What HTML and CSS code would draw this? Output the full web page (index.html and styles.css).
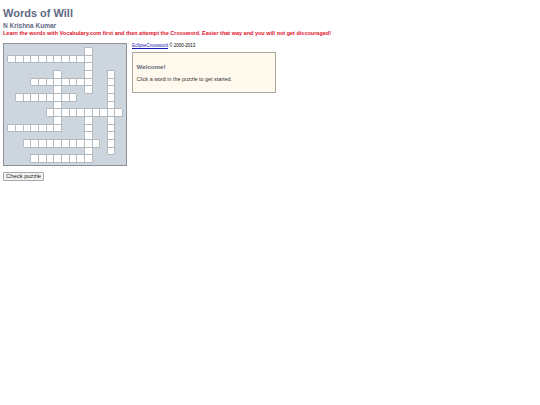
FILE: index.html
```html
<!DOCTYPE html>
<html lang="en">
<head>
<meta charset="utf-8">
<title>Words of Will</title>
<link rel="stylesheet" href="styles.css">
</head>
<body>
<h1 class="title">Words of Will</h1>
<h2 class="author">N Krishna Kumar</h2>
<p class="notice">Learn the words with Vocabulary.com first and then attempt the Crossword. Easier that way and you will not get discouraged!</p>
<div class="main">
  <div class="puzzle">
    <div class="board">
      <i></i><i></i><i></i><i></i><i></i><i></i><i></i><i></i><i></i><i></i><b></b><i></i><i></i><i></i><i></i>
      <b></b><b></b><b></b><b></b><b></b><b></b><b></b><b></b><b></b><b></b><b></b><i></i><i></i><i></i><i></i>
      <i></i><i></i><i></i><i></i><i></i><i></i><i></i><i></i><i></i><i></i><b></b><i></i><i></i><i></i><i></i>
      <i></i><i></i><i></i><i></i><i></i><i></i><b></b><i></i><i></i><i></i><b></b><i></i><i></i><b></b><i></i>
      <i></i><i></i><i></i><b></b><b></b><b></b><b></b><b></b><b></b><b></b><b></b><i></i><i></i><b></b><i></i>
      <i></i><i></i><i></i><i></i><i></i><i></i><b></b><i></i><i></i><i></i><b></b><i></i><i></i><b></b><i></i>
      <i></i><b></b><b></b><b></b><b></b><b></b><b></b><b></b><b></b><i></i><i></i><i></i><i></i><b></b><i></i>
      <i></i><i></i><i></i><i></i><i></i><i></i><b></b><i></i><i></i><i></i><i></i><i></i><i></i><b></b><i></i>
      <i></i><i></i><i></i><i></i><i></i><b></b><b></b><b></b><b></b><b></b><b></b><b></b><b></b><b></b><b></b>
      <i></i><i></i><i></i><i></i><i></i><i></i><b></b><i></i><i></i><i></i><b></b><i></i><i></i><b></b><i></i>
      <b></b><b></b><b></b><b></b><b></b><b></b><b></b><i></i><i></i><i></i><b></b><i></i><i></i><b></b><i></i>
      <i></i><i></i><i></i><i></i><i></i><i></i><i></i><i></i><i></i><i></i><b></b><i></i><i></i><b></b><i></i>
      <i></i><i></i><b></b><b></b><b></b><b></b><b></b><b></b><b></b><b></b><b></b><b></b><i></i><b></b><i></i>
      <i></i><i></i><i></i><i></i><i></i><i></i><i></i><i></i><i></i><i></i><b></b><i></i><i></i><b></b><i></i>
      <i></i><i></i><i></i><b></b><b></b><b></b><b></b><b></b><b></b><b></b><b></b><i></i><i></i><i></i><i></i>
    </div>
    <button class="check" type="button">Check puzzle</button>
  </div>
  <div class="side">
    <p class="credit"><a href="#">EclipseCrossword</a> © 2000-2013</p>
    <div class="welcome">
      <h3>Welcome!</h3>
      <p>Click a word in the puzzle to get started.</p>
    </div>
  </div>
</div>
</body>
</html>
```
FILE: styles.css
```css
html, body { margin: 0; background: #fff; }
body {
  padding: 7px 3px 0;
  font-family: "Liberation Sans", Arial, sans-serif;
  color: #000;
}
.title {
  margin: 0;
  font-size: 11px;
  line-height: 13px;
  color: #5f6984;
  font-weight: bold;
}
.author {
  margin: 2px 0 0;
  font-size: 6.5px;
  line-height: 8px;
  color: #5f6984;
  font-weight: bold;
}
.notice {
  margin: 0;
  font-size: 5.5px;
  line-height: 7px;
  font-weight: bold;
  color: #e0102a;
}
.main {
  display: flex;
  align-items: flex-start;
  gap: 5px;
  margin-top: 6px;
}
.puzzle { width: 124px; }
.board {
  box-sizing: border-box;
  width: 124px;
  height: 123px;
  padding: 3px 3.3px;
  display: grid;
  grid-template-columns: repeat(15, 7.67px);
  grid-template-rows: repeat(15, 7.67px);
  background: #cdd5de;
  border: 1px solid #8e9296;
}
.board b {
  background: #fff;
  box-shadow: inset 1px 1px 0 #b4b9be, 1px 1px 0 #b4b9be;
}
.check {
  display: block;
  margin: 6px 0 0;
  padding: 0;
  width: 41px;
  height: 9px;
  font: 5.8px/7px "Liberation Sans", Arial, sans-serif;
  color: #222;
  background: #f2f2f2;
  border: 0.5px solid #a8a8a8;
  border-radius: 1px;
}
.side { width: 144px; }
.credit {
  margin: 0;
  font-size: 4.5px;
  line-height: 5px;
}
.credit a { color: #1a1ab8; }
.welcome {
  box-sizing: border-box;
  height: 41px;
  margin-top: 4px;
  padding: 10px 3.5px 0;
  background: #fff9ee;
  border: 0.5px solid #aaa79e;
}
.welcome h3 {
  margin: 0;
  font-size: 6.2px;
  line-height: 8px;
  font-weight: bold;
  color: #5f6878;
}
.welcome p {
  margin: 5px 0 0;
  font-size: 5.4px;
  line-height: 6px;
  color: #333;
}
```
